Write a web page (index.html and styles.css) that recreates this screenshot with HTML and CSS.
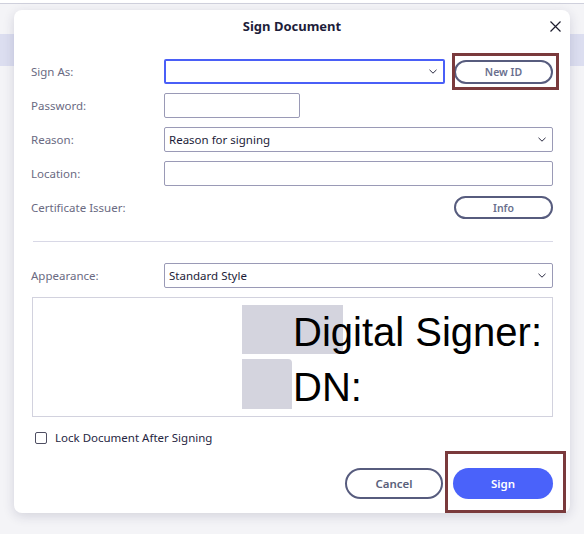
FILE: index.html
```html
<!DOCTYPE html>
<html lang="en">
  <head>
    <meta charset="UTF-8" />
    <meta name="viewport" content="width=device-width, initial-scale=1.0" />
    <title>Sign Document</title>
    <link rel="stylesheet" href="styles.css">
  </head>
  <body>
    <div class="page">
      <div class="topbar"></div>
      <div class="band"></div>
    </div>

    <div class="dialog">
      <div class="dialog-header">
        <h1>Sign Document</h1>
        <button class="close" aria-label="Close">
          <svg width="11" height="11" viewBox="0 0 11 11"><path d="M0.5 0.5L10.5 10.5M10.5 0.5L0.5 10.5" stroke="#1d1d2e" stroke-width="1.2" fill="none"/></svg>
        </button>
      </div>

      <form class="sign-form">
        <div class="row">
          <label>Sign As:</label>
          <div class="field">
            <div class="select select-focus select-short">
              <span></span>
              <svg class="chevron" width="8" height="5" viewBox="0 0 8 5"><path d="M0.5 0.8L4 4.2L7.5 0.8" stroke="#2a2a40" stroke-width="1" fill="none"/></svg>
            </div>
            <button type="button" class="pill pill-new">New ID</button>
          </div>
        </div>
        <div class="row">
          <label>Password:</label>
          <div class="field">
            <div class="input input-short"></div>
          </div>
        </div>
        <div class="row">
          <label>Reason:</label>
          <div class="field">
            <div class="select">
              <span>Reason for signing</span>
              <svg class="chevron" width="8" height="5" viewBox="0 0 8 5"><path d="M0.5 0.8L4 4.2L7.5 0.8" stroke="#2a2a40" stroke-width="1" fill="none"/></svg>
            </div>
          </div>
        </div>
        <div class="row">
          <label>Location:</label>
          <div class="field">
            <div class="input"></div>
          </div>
        </div>
        <div class="row row-issuer">
          <label>Certificate Issuer:</label>
          <div class="field field-end">
            <button type="button" class="pill pill-info">Info</button>
          </div>
        </div>

        <div class="divider"></div>

        <div class="row">
          <label>Appearance:</label>
          <div class="field">
            <div class="select">
              <span>Standard Style</span>
              <svg class="chevron" width="8" height="5" viewBox="0 0 8 5"><path d="M0.5 0.8L4 4.2L7.5 0.8" stroke="#2a2a40" stroke-width="1" fill="none"/></svg>
            </div>
          </div>
        </div>

        <div class="preview">
          <div class="shade shade-1"></div>
          <div class="shade shade-2"></div>
          <div class="sig-text">
            <div>Digital Signer:</div>
            <div>DN:</div>
          </div>
        </div>

        <label class="check">
          <span class="box"></span>
          Lock Document After Signing
        </label>

        <div class="actions">
          <button type="button" class="pill pill-cancel">Cancel</button>
          <button type="submit" class="pill pill-sign">Sign</button>
        </div>
      </form>

      <!-- highlight boxes drawn over the buttons -->
      <div class="mark mark-new"></div>
      <div class="mark mark-sign"></div>
    </div>
  </body>
</html>
```

FILE: styles.css
```css
body {
  margin: 0;
  font-family: "Noto Sans", "Open Sans", sans-serif;
  background-color: #f4f4f7;
  width: 584px;
  height: 534px;
  overflow: hidden;
}
.topbar {
  height: 3px;
  background-color: #ffffff;
  border-bottom: 1px solid #cfd0dc;
}
.band {
  margin-top: 30px;
  height: 32px;
  background-color: #dcdef0;
}
.dialog {
  position: absolute;
  left: 14px;
  top: 10px;
  width: 556px;
  height: 503px;
  box-sizing: border-box;
  padding: 0 17px;
  background-color: white;
  border-radius: 8px;
  box-shadow: 0 3px 12px rgba(40, 40, 80, 0.16);
}
.dialog-header {
  height: 32px;
  display: flex;
  align-items: center;
  justify-content: center;
}
.dialog-header h1 {
  margin: 0;
  font-size: 13px;
  font-weight: bold;
  color: #1d1d3a;
}
.close {
  position: absolute;
  right: 9px;
  top: 11px;
  padding: 0;
  border: none;
  background: none;
  width: 11px;
  height: 11px;
  display: flex;
}
.sign-form {
  margin-top: 17px;
}
.row {
  display: grid;
  grid-template-columns: 133px 1fr;
  align-items: center;
  height: 25px;
  margin-bottom: 9px;
}
.row label {
  font-size: 11.5px;
  color: #6a6a82;
}
.field {
  display: flex;
  align-items: center;
  height: 25px;
}
.field-end {
  justify-content: flex-end;
}
.row-issuer {
  margin-top: 4px;
  margin-bottom: 21px;
}
.input,
.select {
  flex: 1;
  height: 25px;
  box-sizing: border-box;
  border: 1px solid #9a9ab6;
  border-radius: 2px;
  background-color: white;
}
.input-short {
  flex: none;
  width: 136px;
}
.select {
  display: flex;
  align-items: center;
  justify-content: space-between;
  padding: 0 6px 0 4px;
  font-size: 11.5px;
  color: #1c1c38;
}
.select-focus {
  border: 2px solid #4a5ff7;
  padding-left: 3px;
}
.select-short {
  flex: none;
  width: 281px;
}
.chevron {
  display: block;
}
.pill {
  box-sizing: border-box;
  border: 2px solid #575c7e;
  border-radius: 20px;
  background-color: white;
  font-family: "Noto Sans", "Open Sans", sans-serif;
  font-weight: 600;
  color: #6a6f8e;
  cursor: pointer;
  padding: 0;
}
.pill-new {
  margin-left: 9px;
  width: 99px;
  height: 24px;
  font-size: 10.5px;
}
.pill-info {
  width: 99px;
  height: 23px;
  font-size: 10.5px;
}
.divider {
  margin: 0 0 21px 2px;
  height: 1px;
  background-color: #d8d8e6;
}
.preview {
  position: relative;
  margin-left: 1px;
  height: 120px;
  box-sizing: border-box;
  border: 1px solid #d2d2de;
}
.shade {
  position: absolute;
  background-color: #d4d4de;
}
.shade-1 {
  left: 209px;
  top: 7px;
  width: 101px;
  height: 49px;
}
.shade-2 {
  left: 209px;
  top: 61px;
  width: 50px;
  height: 50px;
  border-top-right-radius: 4px;
}
.sig-text {
  position: absolute;
  left: 260px;
  top: 7px;
  font-family: "Liberation Sans", Arial, sans-serif;
  font-size: 40px;
  line-height: 55px;
  color: #000;
  white-space: nowrap;
}
.check {
  display: flex;
  align-items: center;
  margin-top: 13px;
  margin-left: 4px;
  font-size: 11.5px;
  color: #26263f;
}
.box {
  width: 12px;
  height: 12px;
  box-sizing: border-box;
  border: 1.5px solid #4e4e62;
  border-radius: 2px;
  margin-right: 8px;
}
.actions {
  display: flex;
  justify-content: flex-end;
  gap: 10px;
  margin-top: 23px;
}
.pill-cancel {
  width: 98px;
  height: 31px;
  font-size: 11.5px;
  color: #5a5f7a;
}
.pill-sign {
  width: 100px;
  height: 31px;
  font-size: 11.5px;
  color: white;
  border: none;
  background-color: #4a62fa;
}
.mark {
  position: absolute;
  box-sizing: border-box;
  border: 3px solid #7a3a3c;
}
.mark-new {
  left: 438px;
  top: 43px;
  width: 107px;
  height: 37px;
}
.mark-sign {
  left: 431px;
  top: 441px;
  width: 121px;
  height: 62px;
}
```
